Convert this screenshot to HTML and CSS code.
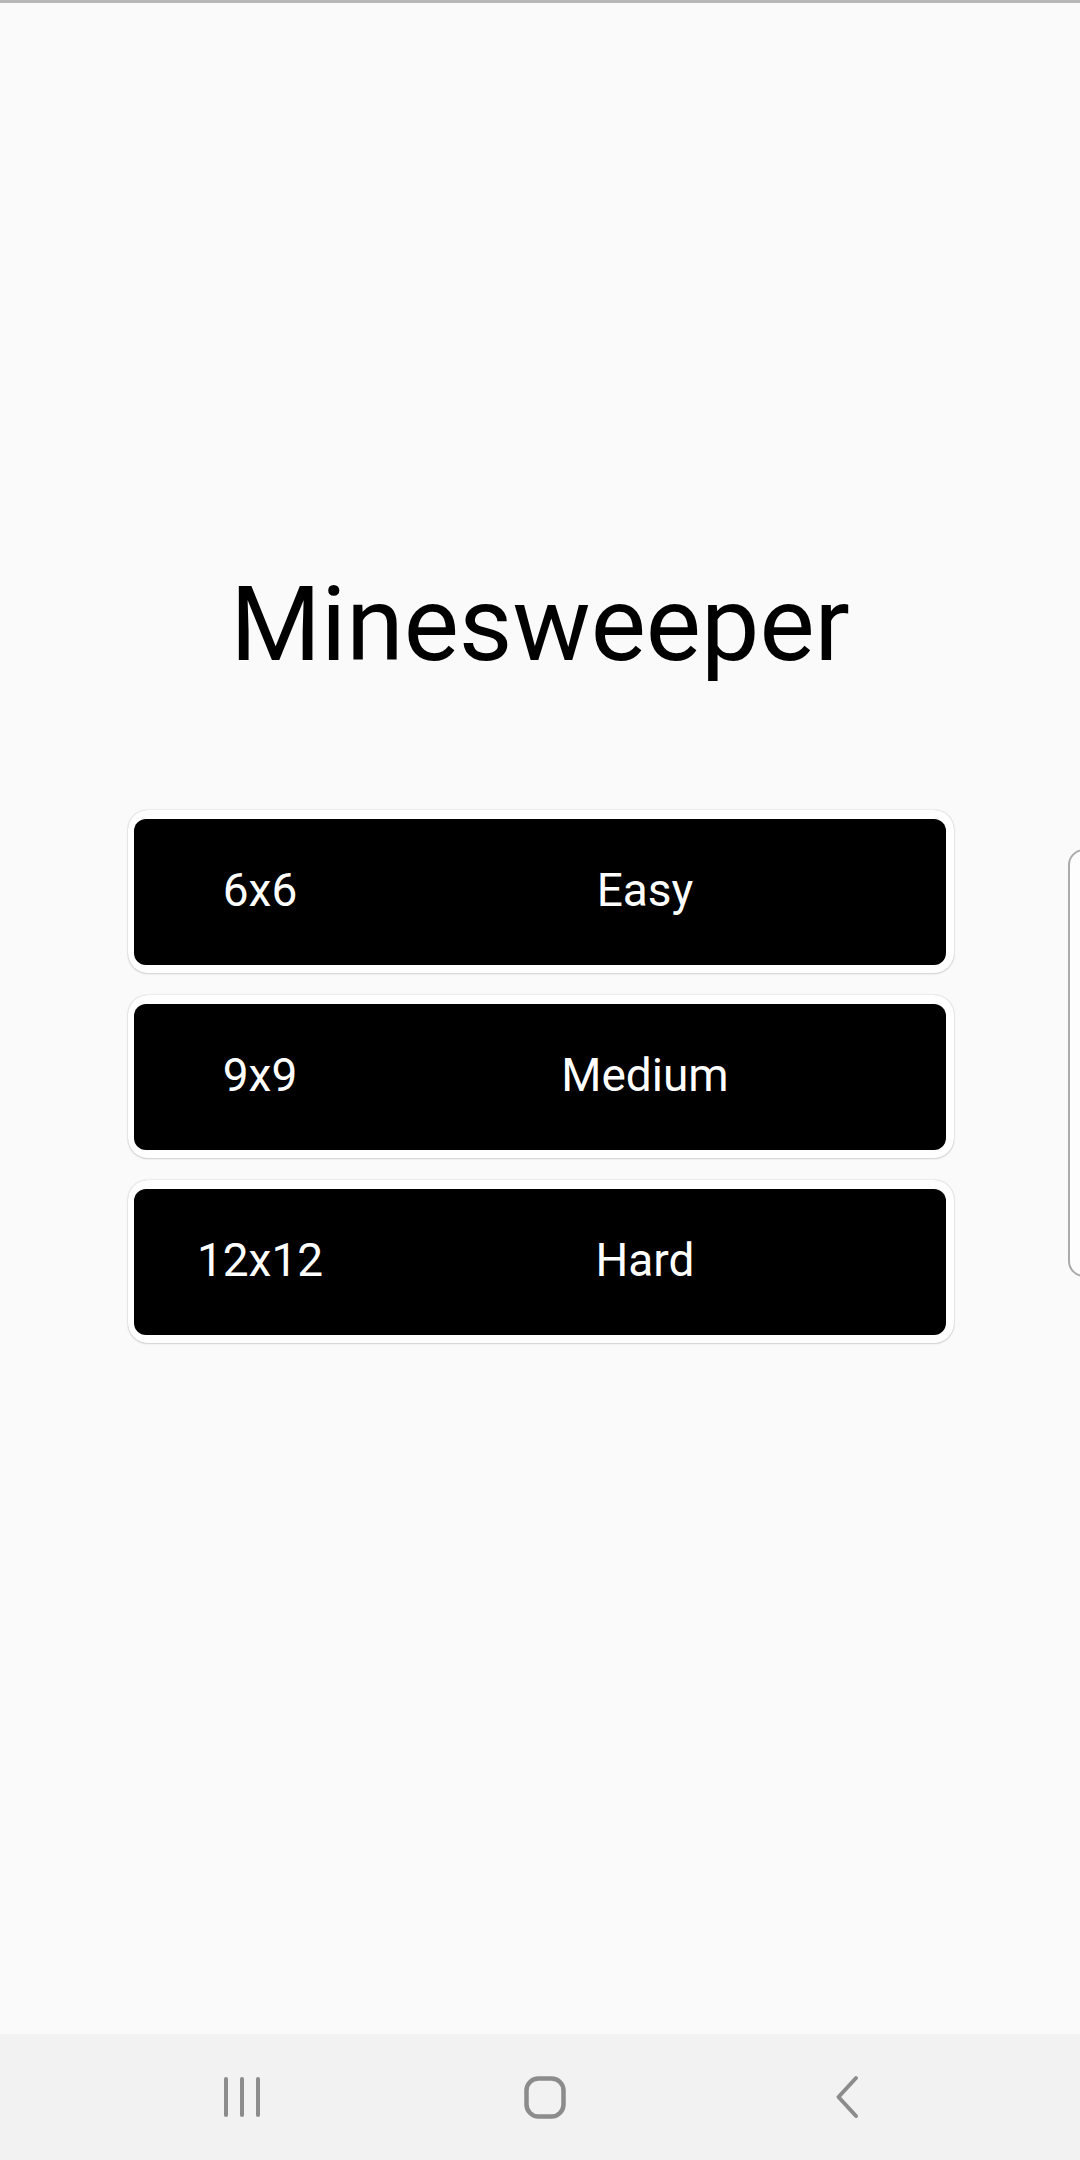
FILE: index.html
```html
<!DOCTYPE html>
<html>
<head>
<meta charset="utf-8">
<link rel="stylesheet" href="styles.css">
</head>
<body>
<div class="screen">
  <div class="topline"></div>
  <main class="content">
    <h1 class="title">Minesweeper</h1>
    <div class="levels">
      <div class="level"><div class="level-inner"><span class="size">6x6</span><span class="name">Easy</span></div></div>
      <div class="level"><div class="level-inner"><span class="size">9x9</span><span class="name">Medium</span></div></div>
      <div class="level"><div class="level-inner"><span class="size">12x12</span><span class="name">Hard</span></div></div>
    </div>
  </main>
  <div class="edge-handle"></div>
  <nav class="navbar">
    <div class="nav-slot">
      <svg class="nav-icon" width="40" height="42" viewBox="0 0 40 42"><g stroke="#8c8c8c" stroke-width="4" stroke-linecap="round"><line x1="4" y1="3" x2="4" y2="39"/><line x1="20" y1="3" x2="20" y2="39"/><line x1="36" y1="3" x2="36" y2="39"/></g></svg>
    </div>
    <div class="nav-slot">
      <svg class="nav-icon" width="42" height="43" viewBox="0 0 42 43"><rect x="2.5" y="2.5" width="37" height="38" rx="12" fill="none" stroke="#8c8c8c" stroke-width="4.5"/></svg>
    </div>
    <div class="nav-slot">
      <svg class="nav-icon" width="26" height="44" viewBox="0 0 26 44"><polyline points="21,3 3.5,22 21,41" fill="none" stroke="#8c8c8c" stroke-width="4" stroke-linecap="round" stroke-linejoin="round"/></svg>
    </div>
  </nav>
</div>
</body>
</html>
```

FILE: styles.css
```css
* { box-sizing: border-box; }
html, body {
  margin: 0;
  padding: 0;
  background: #fafafa;
}
body {
  font-family: Roboto, "Noto Sans", "Liberation Sans", sans-serif;
}
.screen {
  position: relative;
  width: 1080px;
  height: 2160px;
  display: flex;
  flex-direction: column;
  overflow: hidden;
  background: #fafafa;
}
.topline {
  height: 3px;
  background: #b7b7b7;
  flex: none;
}
.content {
  flex: 1;
  display: flex;
  flex-direction: column;
  align-items: center;
}
.title {
  margin: 561px 0 0 0;
  font-size: 104px;
  font-weight: 400;
  line-height: 122px;
  color: #000;
  letter-spacing: 0;
}
.levels {
  margin-top: 124px;
  display: flex;
  flex-direction: column;
  gap: 22px;
  padding-left: 2px;
}
.level {
  width: 826px;
  height: 163px;
  background: #ffffff;
  border-radius: 20px;
  padding: 9px 8px 8px 6px;
  box-shadow: 0 0 1.5px rgba(0,0,0,0.28), 0 1px 2px rgba(0,0,0,0.12);
}
.level-inner {
  height: 100%;
  background: #000;
  border-radius: 12px;
  display: grid;
  grid-template-columns: 252px 518px;
  align-items: center;
  color: #fff;
  font-size: 46px;
  line-height: 1;
  padding-bottom: 5px;
}
.size, .name {
  text-align: center;
}
.edge-handle {
  position: absolute;
  left: 1068px;
  top: 849px;
  width: 40px;
  height: 428px;
  border: 2px solid #ababab;
  border-radius: 16px;
  background: #fdfdfd;
}
.navbar {
  flex: none;
  height: 126px;
  background: #f2f2f2;
  display: flex;
  justify-content: center;
  align-items: center;
  padding-left: 10px;
}
.nav-slot {
  width: 303px;
  display: flex;
  justify-content: center;
  align-items: center;
}
.nav-icon { display: block; }
```
